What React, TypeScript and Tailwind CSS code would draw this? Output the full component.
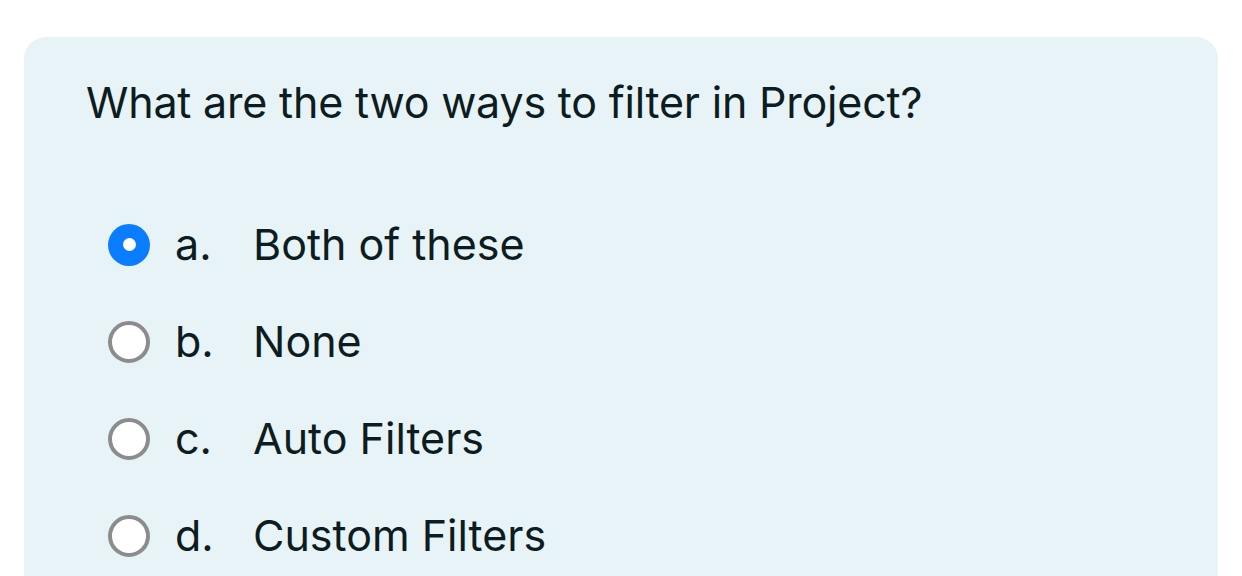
import React from "react";

const OPTIONS = [
  { key: "a.", label: "Both of these", selected: true },
  { key: "b.", label: "None", selected: false },
  { key: "c.", label: "Auto Filters", selected: false },
  { key: "d.", label: "Custom Filters", selected: false },
];

function Radio({ selected }: { selected: boolean }) {
  if (selected) {
    return (
      <span className="flex h-[42px] w-[42px] shrink-0 items-center justify-center rounded-full bg-[#0a7cff]">
        <span className="block h-[13px] w-[13px] rounded-full bg-white" />
      </span>
    );
  }
  return <span className="block h-[42px] w-[42px] shrink-0 rounded-full border-[4px] border-[#8c8c8c] bg-white" />;
}

export default function App() {
  return (
    <div className="h-[576px] w-[1242px] overflow-hidden bg-white pt-[37px] px-[24px]" style={{ fontFamily: "Inter, 'Noto Sans', sans-serif" }}>
      <div className="h-[600px] rounded-[22px] bg-[#e7f3f6] pl-[62px] pt-[37px] text-[#0c1c20]">
        <h1 className="text-[43px] leading-[56px] tracking-[-0.2px]">What are the two ways to filter in Project?</h1>
        <div className="mt-[66px] flex flex-col">
          {OPTIONS.map((o) => (
            <label key={o.key} className="flex h-[97px] items-center text-[43px]">
              <span className="ml-[22px]"><Radio selected={o.selected} /></span>
              <span className="ml-[25px] w-[78px]">{o.key}</span>
              <span>{o.label}</span>
            </label>
          ))}
        </div>
      </div>
    </div>
  );
}
